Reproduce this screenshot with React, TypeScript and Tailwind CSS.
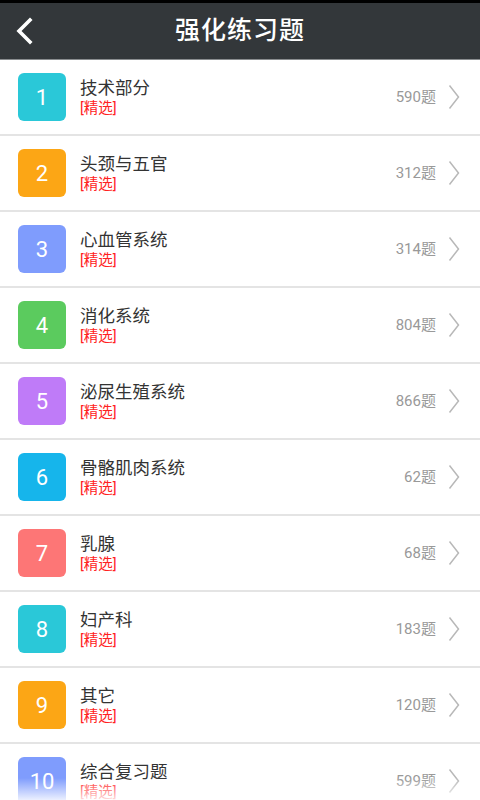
const items = [
  { n: 1, name: "技术部分", count: 590, color: "bg-[#2ac8d8]" },
  { n: 2, name: "头颈与五官", count: 312, color: "bg-[#fca615]" },
  { n: 3, name: "心血管系统", count: 314, color: "bg-[#7f9cfd]" },
  { n: 4, name: "消化系统", count: 804, color: "bg-[#5bcb5e]" },
  { n: 5, name: "泌尿生殖系统", count: 866, color: "bg-[#bf7bf8]" },
  { n: 6, name: "骨骼肌肉系统", count: 62, color: "bg-[#16b5eb]" },
  { n: 7, name: "乳腺", count: 68, color: "bg-[#fd7676]" },
  { n: 8, name: "妇产科", count: 183, color: "bg-[#2ac8d8]" },
  { n: 9, name: "其它", count: 120, color: "bg-[#fca615]" },
  { n: 10, name: "综合复习题", count: 599, color: "bg-[#7f9cfd]" },
];

function Row({ n, name, count, color }: (typeof items)[number]) {
  return (
    <div className="flex h-[76px] items-center border-b-2 border-[#e4e4e4] pl-[18px] pr-[20px]">
      <div
        className={`flex h-[48px] w-[48px] shrink-0 items-center justify-center rounded-[6px] text-[22px] text-white ${color}`}
      >
        {n}
      </div>
      <div className="ml-[14px] flex flex-1 flex-col pt-[2px]">
        <span className="text-[17.5px] leading-[21px] text-[#333]">{name}</span>
        <span className="text-[14.5px] leading-[19px] text-[#f22]">[精选]</span>
      </div>
      <span className="pt-[1px] text-[15px] text-[#999]">{count}题</span>
      <svg className="ml-[12px] h-[26px] w-[12px]" viewBox="0 0 12 26" fill="none">
        <path d="M1.5 1.5 L10.5 13 L1.5 24.5" stroke="#b8b8b8" strokeWidth="1.5" />
      </svg>
    </div>
  );
}

export default function App() {
  return (
    <div
      className="relative h-[800px] w-[480px] overflow-hidden bg-white"
      style={{ fontFamily: 'Roboto, "Noto Sans CJK SC", sans-serif' }}
    >
      <div className="h-[3px] bg-black" />
      <header className="relative flex h-[57px] items-center justify-center border-b border-[#8a8d8f] bg-[#33373a]">
        <svg className="absolute left-[14px] top-[14px] h-[28px] w-[20px]" viewBox="0 0 20 28" fill="none">
          <path d="M16 3 L5 14 L16 25" stroke="#fff" strokeWidth="3.6" strokeLinecap="square" />
        </svg>
        <h1 className="text-[25px] font-medium tracking-[1px] text-white">强化练习题</h1>
      </header>
      <div>
        {items.map((it) => (
          <Row key={it.n} {...it} />
        ))}
      </div>
      <div className="pointer-events-none absolute bottom-0 left-0 h-[22px] w-full bg-gradient-to-b from-white/0 to-white/85" />
    </div>
  );
}
